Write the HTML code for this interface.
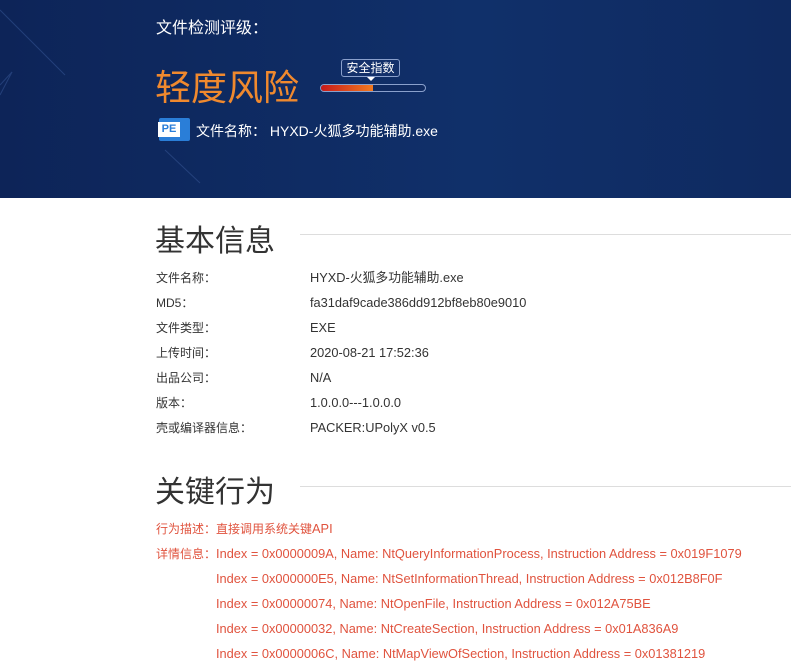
<!DOCTYPE html>
<html><head><meta charset="utf-8"><style>
*{margin:0;padding:0;box-sizing:border-box}
body{width:791px;height:661px;overflow:hidden;background:#fff;font-family:"Liberation Sans","Noto Sans CJK SC",sans-serif;position:relative}
.ban{position:absolute;left:0;top:0;width:791px;height:198px;background:linear-gradient(90deg,#0d2458 0%,#10306a 60%,#0f2a60 100%)}
.a{position:absolute;white-space:nowrap}
.row{position:absolute;left:156px;font-size:12px;color:#333;line-height:16px}
.row span{position:absolute;left:154px;top:0;white-space:nowrap;font-size:12.8px;line-height:16px}
.red{position:absolute;font-size:12.8px;color:#e0533e;white-space:nowrap;line-height:16px}
.red b{font-weight:normal;font-size:12px}
h2{position:absolute;left:155px;font-size:30px;font-weight:normal;color:#333}
.ln{position:absolute;left:300px;width:491px;height:1px;background:#ddd}
</style></head><body>
<div class="ban">
<svg width="791" height="198" style="position:absolute;left:0;top:0"><g stroke="#3a5a9a" stroke-width="1" opacity=".5" fill="none"><line x1="0" y1="10" x2="65" y2="75"/><line x1="0" y1="85" x2="12" y2="72"/><line x1="0" y1="95" x2="12" y2="72"/><line x1="165" y1="150" x2="200" y2="183"/></g></svg>
<div class="a" style="left:156px;top:14px;font-size:16px;color:#fff">文件检测评级：</div>
<div class="a" style="left:155px;top:66px;font-size:36px;color:#f0892e;line-height:44px">轻度风险</div>
<div class="a" style="left:341px;top:59px;width:59px;height:18px;border:1px solid #8aa0cc;border-radius:3px;background:#13306a;color:#fff;font-size:12px;text-align:center;line-height:16px">安全指数</div>
<div class="a" style="left:367px;top:77px;width:0;height:0;border:4px solid transparent;border-top-color:#fff"></div>
<div class="a" style="left:320px;top:84px;width:106px;height:8px;border:1px solid #8aa0cc;border-radius:4px;background:#0f2a60;overflow:hidden"><div style="width:52px;height:6px;background:linear-gradient(90deg,#c81a1a,#f07a20)"></div></div>
<div class="a" style="left:159px;top:118px;width:31px;height:23px;background:#2a7ed8;border-radius:2px"></div>
<div class="a" style="left:158px;top:122px;width:22px;height:15px;background:#fff;color:#2a7ed8;font-size:11px;font-weight:bold;text-align:center;line-height:15px">PE</div>
<div class="a" style="left:196px;top:121px;font-size:14px;color:#fff">文件名称： HYXD-火狐多功能辅助.exe</div>
</div>
<h2 style="top:216px">基本信息</h2><div class="ln" style="top:234px"></div>
<div class="row" style="top:270px">文件名称：<span>HYXD-火狐多功能辅助.exe</span></div>
<div class="row" style="top:295px">MD5：<span>fa31daf9cade386dd912bf8eb80e9010</span></div>
<div class="row" style="top:320px">文件类型：<span>EXE</span></div>
<div class="row" style="top:345px">上传时间：<span>2020-08-21 17:52:36</span></div>
<div class="row" style="top:370px">出品公司：<span>N/A</span></div>
<div class="row" style="top:395px">版本：<span>1.0.0.0---1.0.0.0</span></div>
<div class="row" style="top:420px">壳或编译器信息：<span>PACKER:UPolyX v0.5</span></div>
<h2 style="top:467px">关键行为</h2><div class="ln" style="top:486px"></div>
<div class="red" style="left:156px;top:521px"><b>行为描述：直接调用系统关键</b>API</div>
<div class="red" style="left:156px;top:546px"><b>详情信息：</b>Index = 0x0000009A, Name: NtQueryInformationProcess, Instruction Address = 0x019F1079</div>
<div class="red" style="left:216px;top:571px">Index = 0x000000E5, Name: NtSetInformationThread, Instruction Address = 0x012B8F0F</div>
<div class="red" style="left:216px;top:596px">Index = 0x00000074, Name: NtOpenFile, Instruction Address = 0x012A75BE</div>
<div class="red" style="left:216px;top:621px">Index = 0x00000032, Name: NtCreateSection, Instruction Address = 0x01A836A9</div>
<div class="red" style="left:216px;top:646px">Index = 0x0000006C, Name: NtMapViewOfSection, Instruction Address = 0x01381219</div>
</body></html>
